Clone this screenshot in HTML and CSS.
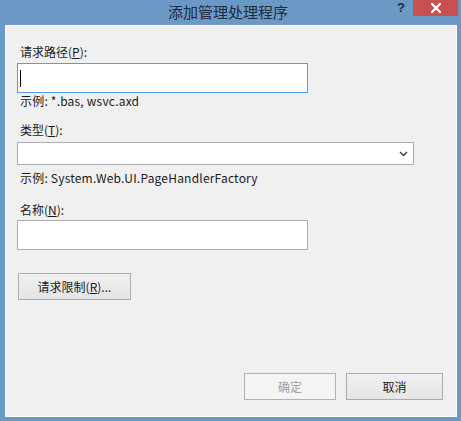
FILE: index.html
```html
<!DOCTYPE html>
<html>
<head>
<meta charset="utf-8">
<link rel="stylesheet" href="styles.css">
</head>
<body>
<div class="window">
  <div class="titlebar">
    <div class="title">添加管理处理程序</div>
    <div class="help">?</div>
    <div class="close">
      <svg width="10" height="10" viewBox="0 0 10 10"><path d="M1 1 L9 9 M9 1 L1 9" stroke="#fff" stroke-width="2.2" stroke-linecap="square"/></svg>
    </div>
  </div>
  <div class="content">
    <div class="label l1">请求路径(<u>P</u>):</div>
    <div class="textbox focused"><span class="caret"></span></div>
    <div class="hint">示例: *.bas, wsvc.axd</div>
    <div class="label l2">类型(<u>T</u>):</div>
    <div class="select">
      <svg width="9" height="6" viewBox="0 0 9 6"><path d="M1 1 L4.5 4.5 L8 1" fill="none" stroke="#444" stroke-width="1.5"/></svg>
    </div>
    <div class="hint h2">示例: System.Web.UI.PageHandlerFactory</div>
    <div class="label l3">名称(<u>N</u>):</div>
    <div class="textbox tb3"></div>
    <div class="btn restrict">请求限制(<u>R</u>)...</div>
    <div class="spacer"></div>
    <div class="footer">
      <div class="btn ok">确定</div>
      <div class="btn cancel">取消</div>
    </div>
  </div>
</div>
</body>
</html>
```
FILE: styles.css
```css
html, body {
  margin: 0;
  padding: 0;
}
body {
  width: 461px;
  height: 421px;
  overflow: hidden;
  font-family: "Noto Sans CJK SC", "Noto Sans", sans-serif;
}
.window {
  width: 461px;
  height: 421px;
  box-sizing: border-box;
  background: #6b98c5;
  padding: 0 4px 4px 5px;
  display: flex;
  flex-direction: column;
}
.titlebar {
  height: 25px;
  flex: none;
  position: relative;
  display: flex;
  align-items: center;
  justify-content: center;
}
.title {
  font-size: 15px;
  line-height: 20px;
  color: #1e2c3b;
  margin-top: -2px;
  margin-left: -6px;
}
.help {
  position: absolute;
  left: 392px;
  top: 0;
  font-family: "Liberation Sans", sans-serif;
  font-weight: bold;
  font-size: 13px;
  line-height: 15px;
  color: #1e2c3b;
}
.close {
  position: absolute;
  left: 408px;
  top: 0;
  width: 45px;
  height: 16px;
  background: #c75050;
  display: flex;
  align-items: center;
  justify-content: center;
}
.content {
  flex: 1;
  background: #f0f0f0;
  border: 1px solid #fbfbfb;
  box-sizing: border-box;
  display: flex;
  flex-direction: column;
  align-items: flex-start;
  padding: 0 0 0 11px;
  font-size: 12px;
  color: #1a1a1a;
}
.label, .hint {
  line-height: 16px;
  padding-left: 3px;
  white-space: nowrap;
}
.hint {
  letter-spacing: 0.2px;
}
.label u { text-decoration-thickness: 1px; text-underline-offset: 1px; }
.l1 { margin-top: 18px; }
.textbox {
  box-sizing: border-box;
  width: 291px;
  height: 30px;
  background: #fff;
  border: 1px solid #abadb3;
  margin-top: 3px;
  display: flex;
  align-items: center;
}
.textbox.focused { border-color: #569de5; }
.caret {
  width: 1px;
  height: 17px;
  background: #000;
  margin-left: 2px;
}
.l2 { margin-top: 13px; }
.select {
  box-sizing: border-box;
  width: 397px;
  height: 23px;
  background: #fff;
  border: 1px solid #abadb3;
  margin-top: 4px;
  display: flex;
  align-items: center;
  justify-content: flex-end;
  padding-right: 5px;
}
.h2 { margin-top: 5px; }
.l3 { margin-top: 16px; }
.tb3 { margin-top: 2px; }
.btn {
  box-sizing: border-box;
  height: 27px;
  border: 1px solid #acacac;
  background: linear-gradient(#f0f0f0, #e5e5e5);
  display: flex;
  align-items: center;
  justify-content: center;
  font-size: 12px;
  color: #1a1a1a;
}
.restrict {
  width: 113px;
  margin-top: 23px;
  margin-left: 1px;
}
.spacer { flex: 1; }
.footer {
  align-self: stretch;
  display: flex;
  justify-content: flex-end;
  gap: 10px;
  padding-right: 13px;
  margin-bottom: 16px;
}
.ok {
  width: 92px;
  background: #f4f4f4;
  border-color: #adb2b5;
  color: #a0a0a0;
}
.cancel {
  width: 97px;
}
```
